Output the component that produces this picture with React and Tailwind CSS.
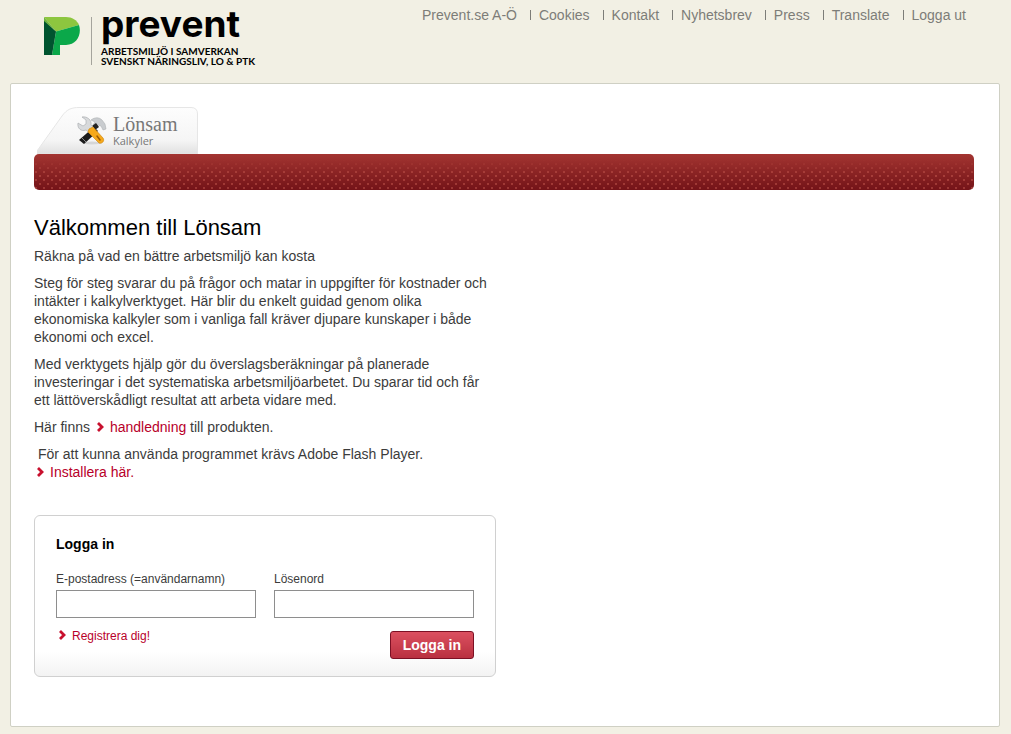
import { useState } from "react";

const navLinks = [
  "Prevent.se A-Ö",
  "Cookies",
  "Kontakt",
  "Nyhetsbrev",
  "Press",
  "Translate",
  "Logga ut",
];

const Logo = () => (
  <a href="#" className="flex items-start text-black">
    <svg viewBox="0 0 36 38" className="mt-[9px] h-[38px] w-9" aria-hidden="true">
      <path d="M0 0H22C28 0 33 3 35 8L12 14.500Z" fill="#8dc63f" />
      <path d="M35 8C38 17 33 28 22 28H16V38H8L12 14.500Z" fill="#0ba84a" />
      <path d="M0 3L12 14.500L8 38H0Z" fill="#00542f" />
      <path d="M0 0L12 14.500L0 4Z" fill="#6cb33f" />
    </svg>
    <span className="mt-[9px] ml-[11px] h-12 w-px bg-[#a5a49c]" />
    <span className="ml-[9px] flex flex-col">
      <span className="font-['Inter',sans-serif] text-[37px] leading-[32px] font-bold">
        prevent
      </span>
      <span className="mt-[6px] font-['Lato',sans-serif] text-[10px] leading-[10px] font-bold">
        ARBETSMILJÖ I SAMVERKAN
        <br />
        SVENSKT NÄRINGSLIV, LO &amp; PTK
      </span>
    </span>
  </a>
);

const Header = () => (
  <header className="flex h-[83px] items-start justify-between pr-[45px] pl-11">
    <div className="pt-2">
      <Logo />
    </div>
    <nav className="flex items-center pt-[6px] text-sm leading-[18px] text-[#7d7d78]">
      {navLinks.map((label, i) => (
        <span key={label} className="flex items-center">
          {i > 0 && <span className="mr-2 ml-[13px] h-[10px] w-px bg-[#7d7d78]" />}
          <a href="#" className="hover:underline">
            {label}
          </a>
        </span>
      ))}
    </nav>
  </header>
);

const ToolsIcon = () => (
  <svg viewBox="0 0 30 30" className="h-[30px] w-[30px]" aria-hidden="true">
    <ellipse cx="15" cy="27" rx="10" ry="1.500" fill="#d6d6d6" />
    {/* hammer */}
    <path d="M17 11L21 15L7 28L2 24Z" fill="#1c1c1c" />
    <path d="M5 22L9 26" stroke="#888" strokeWidth="1" />
    <path
      d="M14 4C18 1 22 1 25 4L28 8L29 13L26 14L24 10L21 9L18 12L16 9L18 6Z"
      fill="#c9cccf"
      stroke="#a4a8ab"
      strokeWidth="0.500"
    />
    <path d="M15 10L19 7L22 11L18 14Z" fill="#222" />
    {/* wrench */}
    <path
      d="M5 1L9 4V8L6 10L1 7C0 12 4 16 9 14L13 17L17 12L14 9C15 4 10 0 5 1Z"
      fill="#d8dadc"
      stroke="#a4a8ab"
      strokeWidth="0.600"
    />
    <path
      d="M12 13L16 11L26 22C28 25 25 28 22 27L11 16Z"
      fill="#f6a91b"
      stroke="#d08a14"
      strokeWidth="0.700"
    />
    <path d="M20 20L23 24" stroke="#9a5a05" strokeWidth="1.500" strokeLinecap="round" />
  </svg>
);

const ProductTab = () => (
  <a href="#" className="relative ml-[3px] flex h-[47px] w-[161px] items-start pl-10">
    <svg viewBox="0 0 161 47" className="absolute inset-0 h-full w-full" aria-hidden="true">
      <defs>
        <linearGradient id="tabFill" x1="0" y1="0" x2="0" y2="1">
          <stop offset="0" stopColor="#fdfdfd" />
          <stop offset="0.700" stopColor="#f5f5f5" />
          <stop offset="1" stopColor="#e0e0e0" />
        </linearGradient>
      </defs>
      <path
        d="M0 47V44L25 9C30 2 35 0.500 42 0.500H154Q160.500 0.500 160.500 7V47Z"
        fill="url(#tabFill)"
        stroke="#e6e6e6"
      />
    </svg>
    <span className="relative mt-[9px]">
      <ToolsIcon />
    </span>
    <span className="relative ml-[6px] flex flex-col pt-[7px] text-[#777]">
      <span className="font-['Liberation_Serif',serif] text-xl leading-5">Lönsam</span>
      <span className="font-['Open_Sans',sans-serif] text-[11px] leading-[14px]">Kalkyler</span>
    </span>
  </a>
);

const Banner = () => (
  <div className="h-9 overflow-hidden rounded-[5px] bg-gradient-to-b from-[#a33431] to-[#741318]">
    <svg className="h-full w-full" aria-hidden="true">
      <defs>
        <pattern id="dots" width="8" height="8" patternUnits="userSpaceOnUse">
          <circle cx="2" cy="2" r="1.100" fill="#c4584f" />
          <circle cx="6" cy="6" r="1.100" fill="#c4584f" />
        </pattern>
        <linearGradient id="fade" x1="0" y1="0" x2="0" y2="1">
          <stop offset="0.150" stopColor="#000" />
          <stop offset="0.550" stopColor="#aaa" />
          <stop offset="1" stopColor="#999" />
        </linearGradient>
        <mask id="dotMask">
          <rect width="100%" height="100%" fill="url(#fade)" />
        </mask>
      </defs>
      <rect width="100%" height="100%" fill="url(#dots)" mask="url(#dotMask)" />
    </svg>
  </div>
);

const ArrowLink = ({ children }) => (
  <a href="#" className="text-[#b8002a] hover:underline">
    <svg
      viewBox="0 0 7 10"
      className="mr-[6px] ml-[3px] inline-block h-[10px] w-[7px] align-baseline"
      aria-hidden="true"
    >
      <path d="M1 1L5 5L1 9" fill="none" stroke="#c8102e" strokeWidth="2.800" />
    </svg>
    {children}
  </a>
);

const inputClass = "h-7 w-full border border-[#8e8e8e] bg-white px-2 text-sm text-black outline-none";

const LoginForm = () => {
  const [email, setEmail] = useState("");
  const [password, setPassword] = useState("");

  return (
    <form
      onSubmit={(e) => e.preventDefault()}
      className="mt-[34px] rounded-md border border-[#d0d0d0] bg-gradient-to-b from-white from-85% to-[#f3f3f3] px-[21px] pt-[19px] pb-[17px]"
    >
      <h2 className="text-sm leading-[18px] font-bold text-black">Logga in</h2>
      <div className="mt-[17px] grid grid-cols-2 gap-[18px] text-xs leading-[18px]">
        <div>
          <label htmlFor="email" className="mb-[2px] block">
            E-postadress (=användarnamn)
          </label>
          <input
            id="email"
            type="text"
            value={email}
            onChange={(e) => setEmail(e.target.value)}
            className={inputClass}
          />
        </div>
        <div>
          <label htmlFor="password" className="mb-[2px] block">
            Lösenord
          </label>
          <input
            id="password"
            type="password"
            value={password}
            onChange={(e) => setPassword(e.target.value)}
            className={inputClass}
          />
        </div>
      </div>
      <div className="mt-[9px] flex items-start justify-between text-xs leading-[18px]">
        <ArrowLink>Registrera dig!</ArrowLink>
        <button
          type="submit"
          className="mt-1 h-7 cursor-pointer rounded-[3px] border border-[#7c1024] bg-gradient-to-b from-[#dc5060] to-[#b93040] px-3 text-sm font-bold text-white"
        >
          Logga in
        </button>
      </div>
    </form>
  );
};

const App = () => {
  return (
    <div className="flex min-h-screen flex-col bg-[#f2f0e4] font-['Liberation_Sans',Arial,sans-serif]">
      <Header />
      <main className="mr-[11px] mb-[7px] ml-[10px] flex-1 rounded-xs border border-[#cfd0c4] bg-white pt-[23px] pr-[25px] pb-[49px] pl-[23px]">
        <ProductTab />
        <Banner />

        <div className="mt-6 max-w-[462px] text-sm leading-[18px] text-[#3c3c3c]">
          <h1 className="text-[22px] leading-7 text-black">Välkommen till Lönsam</h1>
          <div className="mt-[5px] flex flex-col gap-[9px]">
            <p>Räkna på vad en bättre arbetsmiljö kan kosta</p>
            <p>
              Steg för steg svarar du på frågor och matar in uppgifter för kostnader och intäkter i
              kalkylverktyget. Här blir du enkelt guidad genom olika ekonomiska kalkyler som i
              vanliga fall kräver djupare kunskaper i både ekonomi och excel.
            </p>
            <p>
              Med verktygets hjälp gör du överslagsberäkningar på planerade investeringar i det
              systematiska arbetsmiljöarbetet. Du sparar tid och får ett lättöverskådligt resultat
              att arbeta vidare med.
            </p>
            <p>
              Här finns <ArrowLink>handledning</ArrowLink> till produkten.
            </p>
            <p>
              &nbsp;För att kunna använda programmet krävs Adobe Flash Player.
              <br />
              <ArrowLink>Installera här.</ArrowLink>
            </p>
          </div>
          <LoginForm />
        </div>
      </main>
    </div>
  );
};

export default App;
